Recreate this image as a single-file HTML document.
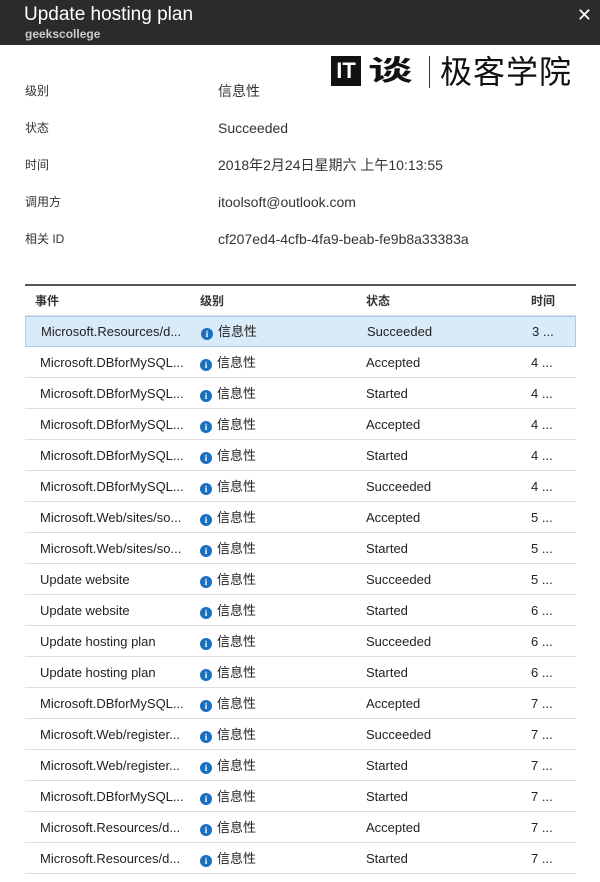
<!DOCTYPE html>
<html><head><meta charset="utf-8"><style>
*{margin:0;padding:0;box-sizing:border-box}
body{width:600px;height:882px;background:#fff;font-family:"Liberation Sans","Noto Sans CJK SC",sans-serif;position:relative;overflow:hidden;color:#222}
.hdr{position:absolute;left:0;top:0;width:600px;height:45px;background:#2b2b2b}
.t1{position:absolute;left:24px;top:4px;color:#fff;font-size:19px;line-height:22px}
.t2{position:absolute;left:25px;top:27px;color:#ccc;font-size:12px;font-weight:bold;line-height:14px}
.x{position:absolute;right:8px;top:5px;color:#fff;font-size:18px;line-height:20px}
.lab{position:absolute;left:25px;font-size:12px;color:#333;line-height:16px}
.val{position:absolute;left:218px;font-size:14px;color:#333;line-height:18px}
.tbl{position:absolute;left:25px;top:284px;width:551px;border-top:2px solid #555}
.row{height:31px;border-bottom:1px solid #ddd;position:relative;font-size:13px}
.row div{position:absolute;top:8px;white-space:nowrap;line-height:15px}
.th div{font-size:12px;font-weight:bold;color:#333}
.c1{left:15px}.c2{left:175px}.c3{left:341px}.c4{left:506px}
.ic{display:inline-block;width:12px;height:12px;border-radius:50%;background:#1a6fc0;color:#fff;font-size:9px;font-weight:bold;text-align:center;line-height:12px;margin-right:5px;vertical-align:-1px;font-family:"Liberation Serif",serif}
.sel{background:#d9eaf8;border:1px solid #a9cdee}
.sel div{top:7px}
</style></head><body>
<div class="hdr"><div class="t1">Update hosting plan</div><div class="t2">geekscollege</div><div class="x">✕</div></div>
<div style="position:absolute;left:331px;top:56px;width:30px;height:30px;background:#111;color:#fff;font-weight:bold;font-size:22px;text-align:center;line-height:30px">IT</div>
<div style="position:absolute;left:368px;top:54px;font-size:28px;line-height:34px;font-weight:bold;color:#111;transform:scaleX(1.6);transform-origin:left">谈</div>
<div style="position:absolute;left:429px;top:56px;width:1px;height:32px;background:#333"></div>
<div style="position:absolute;left:440px;top:52px;font-size:32px;line-height:40px;color:#111;letter-spacing:1px">极客学院</div>
<div class="lab" style="top:83px">级别</div><div class="val" style="top:82px">信息性</div>
<div class="lab" style="top:120px">状态</div><div class="val" style="top:119px">Succeeded</div>
<div class="lab" style="top:157px">时间</div><div class="val" style="top:156px">2018年2月24日星期六 上午10:13:55</div>
<div class="lab" style="top:194px">调用方</div><div class="val" style="top:193px">itoolsoft@outlook.com</div>
<div class="lab" style="top:231px">相关 ID</div><div class="val" style="top:230px">cf207ed4-4cfb-4fa9-beab-fe9b8a33383a</div>
<div class="tbl">
<div class="row th" style="height:30px"><div class="c1" style="left:10px">事件</div><div class="c2">级别</div><div class="c3">状态</div><div class="c4">时间</div></div>
<div class="row sel"><div class="c1">Microsoft.Resources/d...</div><div class="c2"><span class="ic">i</span>信息性</div><div class="c3">Succeeded</div><div class="c4">3 ...</div></div>
<div class="row"><div class="c1">Microsoft.DBforMySQL...</div><div class="c2"><span class="ic">i</span>信息性</div><div class="c3">Accepted</div><div class="c4">4 ...</div></div>
<div class="row"><div class="c1">Microsoft.DBforMySQL...</div><div class="c2"><span class="ic">i</span>信息性</div><div class="c3">Started</div><div class="c4">4 ...</div></div>
<div class="row"><div class="c1">Microsoft.DBforMySQL...</div><div class="c2"><span class="ic">i</span>信息性</div><div class="c3">Accepted</div><div class="c4">4 ...</div></div>
<div class="row"><div class="c1">Microsoft.DBforMySQL...</div><div class="c2"><span class="ic">i</span>信息性</div><div class="c3">Started</div><div class="c4">4 ...</div></div>
<div class="row"><div class="c1">Microsoft.DBforMySQL...</div><div class="c2"><span class="ic">i</span>信息性</div><div class="c3">Succeeded</div><div class="c4">4 ...</div></div>
<div class="row"><div class="c1">Microsoft.Web/sites/so...</div><div class="c2"><span class="ic">i</span>信息性</div><div class="c3">Accepted</div><div class="c4">5 ...</div></div>
<div class="row"><div class="c1">Microsoft.Web/sites/so...</div><div class="c2"><span class="ic">i</span>信息性</div><div class="c3">Started</div><div class="c4">5 ...</div></div>
<div class="row"><div class="c1">Update website</div><div class="c2"><span class="ic">i</span>信息性</div><div class="c3">Succeeded</div><div class="c4">5 ...</div></div>
<div class="row"><div class="c1">Update website</div><div class="c2"><span class="ic">i</span>信息性</div><div class="c3">Started</div><div class="c4">6 ...</div></div>
<div class="row"><div class="c1">Update hosting plan</div><div class="c2"><span class="ic">i</span>信息性</div><div class="c3">Succeeded</div><div class="c4">6 ...</div></div>
<div class="row"><div class="c1">Update hosting plan</div><div class="c2"><span class="ic">i</span>信息性</div><div class="c3">Started</div><div class="c4">6 ...</div></div>
<div class="row"><div class="c1">Microsoft.DBforMySQL...</div><div class="c2"><span class="ic">i</span>信息性</div><div class="c3">Accepted</div><div class="c4">7 ...</div></div>
<div class="row"><div class="c1">Microsoft.Web/register...</div><div class="c2"><span class="ic">i</span>信息性</div><div class="c3">Succeeded</div><div class="c4">7 ...</div></div>
<div class="row"><div class="c1">Microsoft.Web/register...</div><div class="c2"><span class="ic">i</span>信息性</div><div class="c3">Started</div><div class="c4">7 ...</div></div>
<div class="row"><div class="c1">Microsoft.DBforMySQL...</div><div class="c2"><span class="ic">i</span>信息性</div><div class="c3">Started</div><div class="c4">7 ...</div></div>
<div class="row"><div class="c1">Microsoft.Resources/d...</div><div class="c2"><span class="ic">i</span>信息性</div><div class="c3">Accepted</div><div class="c4">7 ...</div></div>
<div class="row"><div class="c1">Microsoft.Resources/d...</div><div class="c2"><span class="ic">i</span>信息性</div><div class="c3">Started</div><div class="c4">7 ...</div></div>
</div>
</body></html>
